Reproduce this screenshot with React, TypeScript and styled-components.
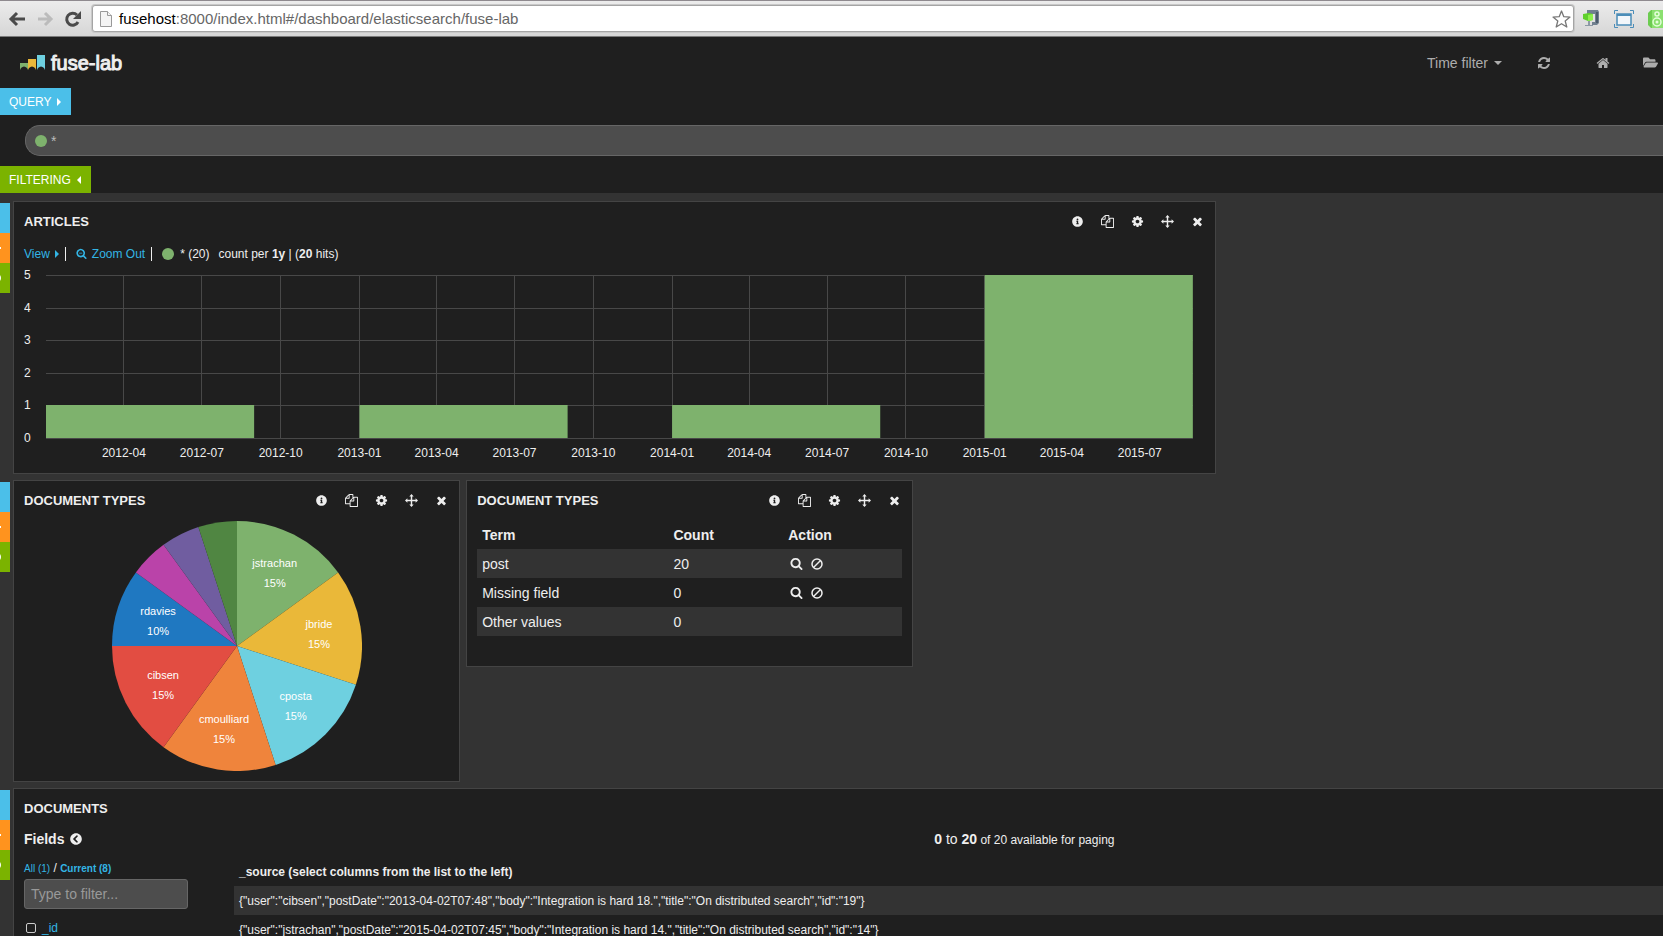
import React from "react";
import styled, { createGlobalStyle } from "styled-components";
import { FaInfoCircle, FaFolderOpen, FaChevronCircleLeft } from "react-icons/fa";

const Global = createGlobalStyle`
  *, *::before, *::after { box-sizing: border-box; }
  html { overflow: hidden; }
  body { margin: 0; background: #333; color: #eee; font: 14px/20px "Liberation Sans", Arial, sans-serif; }
  button, input { font: inherit; color: inherit; }
  button { border: 0; padding: 0; background: none; cursor: pointer; }
  a { color: #33b5e5; text-decoration: none; }
  svg { display: block; flex: none; }
`;

const Page = styled.div`
  height: 100vh;
  overflow: hidden;
`;

const BrowserBar = styled.div`
  display: flex;
  align-items: center;
  height: 37px;
  overflow: hidden;
  background: linear-gradient(#ececec, #d6d6d6);
  border-top: 1px solid #8f8a8f;
  border-bottom: 1px solid #7b7b7b;
`;
const BarGroup = styled.div<{ $gap: number }>`
  display: flex;
  align-items: center;
  flex: none;
  gap: ${(p) => p.$gap}px;
  padding: 0 0 0 8px;
`;
const BarButton = styled.button`
  flex: none;
  display: grid;
  place-items: center;
`;
const Address = styled.div`
  flex: 1;
  min-width: 0;
  display: flex;
  align-items: center;
  gap: 7px;
  height: 27px;
  margin-left: 10px;
  padding: 0 2px 0 7px;
  background: #fff;
  border: 1px solid #a5a5a5;
  border-radius: 3px;
  box-shadow: 0 0 0 1px #c8c8c8;
`;
const AddressText = styled.div`
  flex: 1;
  color: #666;
  font-size: 15px;
  b { color: #000; font-weight: 400; }
`;

const Header = styled.header`
  background: #1f1f1f;
`;
const NavBar = styled.nav`
  display: flex;
  align-items: center;
  height: 51px;
  padding-left: 20px;
`;
const Brand = styled.h1`
  display: flex;
  align-items: center;
  gap: 6px;
  margin: 0;
  flex: 1;
  font-size: 20px;
  line-height: 24px;
  font-weight: 400;
  -webkit-text-stroke: 1px #eee;
`;
const NavItem = styled.button<{ $gap: number }>`
  display: flex;
  align-items: center;
  gap: 6px;
  margin-right: ${(p) => p.$gap}px;
  color: #adadad;
`;
const Toggle = styled.button<{ $color: string }>`
  display: flex;
  align-items: center;
  gap: 6px;
  height: 27px;
  padding: 0 10px 0 9px;
  background: ${(p) => p.$color};
  color: #fff;
  font-size: 12px;
`;
const QueryBox = styled.label`
  display: flex;
  align-items: center;
  gap: 4px;
  height: 31px;
  margin: 10px 0 10px 25px;
  padding-left: 9px;
  background: #4d4d4d;
  border: 1px solid #666;
  border-right: 0;
  border-radius: 15px 0 0 15px;
`;
const Dot = styled.span`
  flex: none;
  width: 12px;
  height: 12px;
  border-radius: 50%;
  background: #7eb26d;
`;
const QueryInput = styled.input`
  flex: 1;
  min-width: 0;
  border: 0;
  outline: 0;
  padding: 0;
  background: none;
  color: #bbb;
`;

const Board = styled.main`
  display: flex;
  flex-direction: column;
  gap: 6px;
  padding-top: 8px;
`;
const Row = styled.section`
  display: flex;
  align-items: flex-start;
`;
const RowTabs = styled.div`
  flex: none;
  width: 10px;
  margin: 2px 3px 0 0;
`;
const RowTab = styled.button<{ $color: string }>`
  display: flex;
  align-items: center;
  width: 10px;
  height: 30px;
  background: ${(p) => p.$color};
  color: #fff;
`;
const Cells = styled.div`
  flex: 1;
  min-width: 0;
  display: flex;
  align-items: flex-start;
  gap: 6px;
`;
const Panel = styled.article<{ $width: string; $height: number; $bleed?: boolean }>`
  width: ${(p) => p.$width};
  min-height: ${(p) => p.$height}px;
  padding: 0 ${(p) => (p.$bleed ? 0 : 10)}px 0 10px;
  background: #1f1f1f;
  border: 1px solid #444;
  border-right-width: ${(p) => (p.$bleed ? 0 : 1)}px;
`;
const PanelHead = styled.div`
  display: flex;
  align-items: center;
  justify-content: space-between;
  height: 39px;
`;
const PanelTitle = styled.h2`
  margin: 0;
  font-size: 13px;
  line-height: 20px;
`;
const Tools = styled.div`
  display: flex;
  align-items: center;
  gap: 17px;
  padding-right: 1px;
`;
const Tool = styled.button`
  display: grid;
  place-items: center;
  width: 13px;
  height: 14px;
  color: #eee;
`;
const Legend = styled.div`
  display: flex;
  align-items: center;
  height: 25px;
  font-size: 12px;
  white-space: pre;
`;
const LegendLink = styled.a`
  display: flex;
  align-items: center;
  gap: 5px;
`;
const Divider = styled.span`
  width: 1px;
  height: 14px;
  margin: 0 10px 0 6px;
  background: #eee;
`;
const SeriesLabel = styled.span`
  display: flex;
  align-items: center;
  gap: 6px;
  margin-right: 9px;
`;
const AxisText = styled.text`
  fill: #eee;
  font-size: 12px;
`;
const PlotRow = styled.div`
  display: flex;
  height: 200px;
  margin-top: 2px;
  padding-right: 12px;
`;
const PieWrap = styled.div`
  display: flex;
  justify-content: center;
`;
const PieText = styled.text`
  fill: #fff;
  font-size: 11px;
  text-anchor: middle;
`;

const Table = styled.table`
  width: 100%;
  border-collapse: collapse;
  table-layout: fixed;
  tbody tr:nth-child(odd) { background: #333; }
  th, td { height: 29px; padding: 0 5px; text-align: left; white-space: nowrap; }
`;
const Actions = styled.div`
  display: flex;
  gap: 7px;
  padding-left: 2px;
`;

const DocsBody = styled.div`
  display: flex;
  gap: 46px;
`;
const Fields = styled.aside`
  flex: none;
  width: 164px;
`;
const FieldsTitle = styled.h3`
  display: flex;
  align-items: center;
  gap: 6px;
  margin: 0;
  font-size: 14px;
  line-height: 22px;
`;
const FieldScopes = styled.div`
  margin-top: 8px;
  font-size: 10px;
  white-space: pre;
  span { font-size: 12px; }
`;
const FilterInput = styled.input`
  display: block;
  width: 100%;
  height: 30px;
  padding: 0 6px;
  background: #4d4d4d;
  border: 1px solid #666;
  border-radius: 3px;
  &::placeholder { color: #999; opacity: 1; }
`;
const FieldItem = styled.div`
  display: flex;
  align-items: center;
  gap: 6px;
  margin-top: 12px;
  padding-left: 2px;
  font-size: 12px;
  line-height: 14px;
`;
const Check = styled.input`
  appearance: none;
  width: 10px;
  height: 10px;
  margin: 0;
  border: 1px solid #ccc;
  border-radius: 2px;
`;
const Docs = styled.div`
  flex: 1;
  min-width: 0;
`;
const Paging = styled.p`
  margin: 0 0 6px;
  padding-left: 49%;
  font-size: 12px;
  line-height: 22px;
  big { font-size: 14px; }
`;
const DocTable = styled(Table)`
  font-size: 12px;
`;

function Glyph({ d, size = 12, box = 1792 }: { d: string; size?: number; box?: number }) {
  return <svg width={size} height={size} viewBox={`0 0 ${box} ${box}`} fill="currentColor" aria-hidden="true"><path d={d} /></svg>;
}
const REFRESH = "M1511 928q0 5-1 7-64 268-268 434.500t-478 166.500q-146 0-282.500-55t-243.500-157l-129 129q-19 19-45 19t-45-19-19-45v-448q0-26 19-45t45-19h448q26 0 45 19t19 45-19 45l-137 137q71 66 161 102t187 36q134 0 250-65t186-179q11-17 53-117 8-23 30-23h192q13 0 22.500 9.500t9.500 22.500zm25-800v448q0 26-19 45t-45 19h-448q-26 0-45-19t-19-45 19-45l138-138q-148-137-349-137-134 0-250 65t-186 179q-11 17-53 117-8 23-30 23h-199q-13 0-22.500-9.500t-9.500-22.500v-7q65-268 270-434.500t480-166.500q146 0 284 55.500t245 156.500l130-129q19-19 45-19t45 19 19 45z";
const HOME = "M1472 992v480q0 26-19 45t-45 19h-384v-384h-256v384h-384q-26 0-45-19t-19-45v-480q0-1 .5-3t.5-3l575-474 575 474q1 2 1 6zm223-69l-62 74q-8 9-21 11h-3q-13 0-21-7l-692-577-692 577q-12 8-24 7-13-2-21-11l-62-74q-8-10-7-23.500t11-21.500l719-599q32-26 76-26t76 26l244 204v-195q0-14 9-23t23-9h192q14 0 23 9t9 23v408l219 182q10 8 11 21.500t-7 23.500z";
const COPY = "M1696 384q40 0 68 28t28 68v1216q0 40-28 68t-68 28h-960q-40 0-68-28t-28-68v-288h-544q-40 0-68-28t-28-68v-672q0-40 20-88t48-76l408-408q28-28 76-48t88-20h416q40 0 68 28t28 68v328q68-40 128-40h416zm-544 213l-299 299h299v-299zm-640-384l-299 299h299v-299zm196 647l316-316v-416h-384v416q0 40-28 68t-68 28h-416v640h512v-256q0-40 20-88t48-76zm956 804v-1152h-384v416q0 40-28 68t-68 28h-416v640h896z";
const COG = "M1152 896q0-106-75-181t-181-75-181 75-75 181 75 181 181 75 181-75 75-181zm512-109v222q0 12-8 23t-20 13l-185 28q-19 54-39 91 35 50 107 138 10 12 10 25t-9 23q-27 37-99 108t-94 71q-12 0-26-9l-138-108q-44 23-91 38-16 136-29 186-7 28-36 28h-222q-14 0-24.500-8.500t-11.500-21.500l-28-184q-49-16-90-37l-141 107q-10 9-25 9-14 0-25-11-126-114-165-168-7-10-7-23 0-12 8-23 15-21 51-66.500t54-70.500q-27-50-41-99l-183-27q-13-2-21-12.500t-8-23.500v-222q0-12 8-23t19-13l186-28q14-46 39-92-40-57-107-138-10-12-10-24 0-10 9-23 26-36 98.500-107.500t94.500-71.500q13 0 26 10l138 107q44-23 91-38 16-136 29-186 7-28 36-28h222q14 0 24.500 8.500t11.500 21.500l28 184q49 16 90 37l142-107q9-9 24-9 13 0 25 10 129 119 165 170 7 8 7 22 0 12-8 23-15 21-51 66.500t-54 70.500q26 50 41 98l183 28q13 2 21 12.500t8 23.500z";
const TIMES = "M1490 1322q0 40-28 68l-136 136q-28 28-68 28t-68-28l-294-294-294 294q-28 28-68 28t-68-28l-136-136q-28-28-28-68t28-68l294-294-294-294q-28-28-28-68t28-68l136-136q28-28 68-28t68 28l294 294 294-294q28-28 68-28t68 28l136 136q28 28 28 68t-28 68l-294 294 294 294q28 28 28 68z";
const SEARCH = "M1216 832q0-185-131.500-316.500t-316.500-131.500-316.500 131.500-131.500 316.500 131.500 316.500 316.500 131.500 316.500-131.500 131.500-316.500zm512 832q0 52-38 90t-90 38q-54 0-90-38l-343-342q-179 124-399 124-143 0-273.500-55.500t-225-150-150-225-55.500-273.500 55.500-273.500 150-225 225-150 273.500-55.500 273.500 55.500 225 150 150 225 55.500 273.500q0 220-124 399l343 343q37 37 37 90z";
const MOVE = "M896 0l300 330h-200v466h466v-200l330 300-330 300v-200h-466v466h200l-300 330-300-330h200v-466h-466v200l-330-300 330-300v200h466v-466h-200z";

const CaretRight = () => <svg width="4" height="8" fill="currentColor"><path d="M0 0l4 4-4 4z" /></svg>;
const CaretLeft = () => <svg width="4" height="8" fill="currentColor"><path d="M4 0L0 4l4 4z" /></svg>;
const CaretDown = () => <svg width="8" height="4" fill="currentColor"><path d="M0 0h8L4 4z" /></svg>;
const Ban = () => (
  <svg width="12" height="12" viewBox="0 0 12 12" fill="none" stroke="currentColor" strokeWidth="1.5">
    <circle cx="6" cy="6" r="5" /><path d="M2.500 9.500l7-7" />
  </svg>
);
const Logo = () => (
  <svg width="25" height="16" viewBox="0 0 25 16">
    <path d="M0 8h8v7l-1-2q-3-3-6 0l-1 2z" fill="#7eb26d" />
    <path d="M8 4h8v11l-1-2q-3-3-6 0l-1 2z" fill="#eab839" />
    <path d="M17 0h8v15l-1-2q-3-3-6 0l-1 2z" fill="#6ed0e0" />
  </svg>
);

const DAY = 86400000;
const START = Date.UTC(2012, 0, 1);
const SPAN = 1339;
const percent = (year: number, month: number) => `${((Date.UTC(year, month - 1, 1) - START) / DAY / SPAN) * 100}%`;
const TICKS = [
  [2012, 4], [2012, 7], [2012, 10], [2013, 1], [2013, 4], [2013, 7], [2013, 10],
  [2014, 1], [2014, 4], [2014, 7], [2014, 10], [2015, 1], [2015, 4], [2015, 7],
];
const BARS = [[2012, 1], [2013, 1], [2014, 1], [2015, 5]];
const LEVELS = [0, 1, 2, 3, 4, 5];
const levelY = (v: number) => 170 - Math.round(v * 32.6);

const PlotSvg = styled.svg`
  flex: 1 1 0;
  min-width: 0;
  overflow: visible;
`;

function Histogram() {
  return (
    <PlotRow>
      <svg width="22" height="200">
        {LEVELS.map((v) => <AxisText key={v} x="0" y={levelY(v) + 4}>{v}</AxisText>)}
      </svg>
      <PlotSvg height="200">
        <g stroke="#484848" shapeRendering="crispEdges">
          {LEVELS.map((v) => <line key={v} x1="0" x2="100%" y1={levelY(v) + 0.5} y2={levelY(v) + 0.5} />)}
          {TICKS.map(([y, m]) => <line key={`${y}-${m}`} x1={percent(y, m)} x2={percent(y, m)} y1={levelY(5)} y2={levelY(0)} />)}
        </g>
        {BARS.map(([y, v]) => (
          <rect key={y} x={percent(y, 1)} y={levelY(v)} width={`${(243 / SPAN) * 100}%`} height={levelY(0) - levelY(v)} fill="#7eb26d" />
        ))}
        {TICKS.map(([y, m]) => (
          <AxisText key={`${y}-${m}`} x={percent(y, m)} y="189" textAnchor="middle">{`${y}-${String(m).padStart(2, "0")}`}</AxisText>
        ))}
      </PlotSvg>
    </PlotRow>
  );
}

const SLICES = [
  { name: "jstrachan", value: 15, color: "#7eb26d" },
  { name: "jbride", value: 15, color: "#eab839" },
  { name: "cposta", value: 15, color: "#6ed0e0" },
  { name: "cmoulliard", value: 15, color: "#ef843c" },
  { name: "cibsen", value: 15, color: "#e24d42" },
  { name: "rdavies", value: 10, color: "#1f78c1" },
  { name: "", value: 5, color: "#ba43a9" },
  { name: "", value: 5, color: "#705da0" },
  { name: "", value: 5, color: "#508642" },
];

function Pie() {
  const r = 125;
  let sum = 0;
  const point = (v: number, radius: number) => {
    const a = (v / 100) * Math.PI * 2;
    return [r + Math.sin(a) * radius, r - Math.cos(a) * radius];
  };
  return (
    <PieWrap>
      <svg width="250" height="251" role="img" aria-label="Documents by user">
        <g transform="translate(0 1)">
          {SLICES.map((s, i) => {
            const from = sum;
            sum += s.value;
            const [x1, y1] = point(from, r);
            const [x2, y2] = point(sum, r);
            const [tx, ty] = point((from + sum) / 2, 83);
            return (
              <g key={i}>
                <path d={`M${r} ${r}L${x1} ${y1}A${r} ${r} 0 0 1 ${x2} ${y2}Z`} fill={s.color} />
                {s.name && (
                  <>
                    <PieText x={tx} y={ty - 5}>{s.name}</PieText>
                    <PieText x={tx} y={ty + 15}>{s.value}%</PieText>
                  </>
                )}
              </g>
            );
          })}
        </g>
      </svg>
    </PieWrap>
  );
}

function Heading({ title, tools = true }: { title: string; tools?: boolean }) {
  return (
    <PanelHead>
      <PanelTitle>{title}</PanelTitle>
      {tools && (
        <Tools>
          <Tool aria-label="Info"><FaInfoCircle size={11} /></Tool>
          <Tool aria-label="Duplicate"><Glyph d={COPY} size={13} /></Tool>
          <Tool aria-label="Configure"><Glyph d={COG} size={13} /></Tool>
          <Tool aria-label="Move"><Glyph d={MOVE} size={13} /></Tool>
          <Tool aria-label="Remove"><Glyph d={TIMES} size={13} /></Tool>
        </Tools>
      )}
    </PanelHead>
  );
}

function RowControls() {
  return (
    <RowTabs>
      <RowTab $color="#4bbfe9" aria-label="Collapse row" />
      <RowTab $color="#ff931e" aria-label="Configure row">
        <svg width="2" height="4" fill="currentColor"><path d="M0 1h1v2H0z" /></svg>
      </RowTab>
      <RowTab $color="#7bb300" aria-label="Add panel">
        <svg width="2" height="6" fill="currentColor"><path d="M0 0q2 3 0 6z" /></svg>
      </RowTab>
    </RowTabs>
  );
}

const TERMS = [
  { term: "post", count: 20, actions: true },
  { term: "Missing field", count: 0, actions: true },
  { term: "Other values", count: 0, actions: false },
];
const DOCS = [
  '{"user":"cibsen","postDate":"2013-04-02T07:48","body":"Integration is hard 18.","title":"On distributed search","id":"19"}',
  '{"user":"jstrachan","postDate":"2015-04-02T07:45","body":"Integration is hard 14.","title":"On distributed search","id":"14"}',
];

export default function App() {
  return (
    <Page>
      <Global />
      <BrowserBar>
        <BarGroup $gap={10}>
          <BarButton aria-label="Back">
            <svg width="18" height="18" viewBox="0 0 18 18" fill="none" stroke="#4a4a4a" strokeWidth="3"><path d="M17 9H4M9 3L3 9l6 6" /></svg>
          </BarButton>
          <BarButton aria-label="Forward">
            <svg width="18" height="18" viewBox="0 0 18 18" fill="none" stroke="#bbb" strokeWidth="3"><path d="M2 9h12M9 3l6 6-6 6" /></svg>
          </BarButton>
          <BarButton aria-label="Reload">
            <svg width="18" height="18" viewBox="0 0 18 18" fill="none" stroke="#4a4a4a" strokeWidth="3"><path d="M14 12a6 6 0 1 1-1-7" /><path d="M17 1v8H9z" fill="#4a4a4a" stroke="none" /></svg>
          </BarButton>
        </BarGroup>
        <Address>
          <svg width="12" height="16" viewBox="0 0 12 16" fill="#f4f4f4" stroke="#999"><path d="M.5.5h7l4 4v11H.5z" /><path d="M7.500.5v4h4" /></svg>
          <AddressText><b>fusehost</b>:8000/index.html#/dashboard/elasticsearch/fuse-lab</AddressText>
          <BarButton aria-label="Bookmark">
            <svg width="19" height="18" viewBox="0 0 19 18" fill="none" stroke="#777" strokeWidth="1.3" strokeLinejoin="round">
              <path d="M9.500 1l2.300 5.700 6.200.4-4.800 3.900 1.600 6-5.300-3.300L4.200 17l1.600-6L1 7.100l6.200-.4z" />
            </svg>
          </BarButton>
        </Address>
        <BarGroup $gap={14}>
          <BarButton aria-label="Archive extension">
            <svg width="18" height="18" viewBox="0 0 18 18">
              <path d="M5 0h11l1 2v11l-2 2h-5v-3h3V4H5z" fill="#70808f" />
              <path d="M14 2h2v11h-2z" fill="#4c5b6b" />
              <path d="M1 4l6-1 4 1v6l-5 1-5-2z" fill="#5fd02c" />
              <path d="M6 5l5-1v6l-5 1z" fill="#8df04c" />
              <path d="M6 11h2v5H6zM3 15h8v1H3z" fill="#8c99a5" />
            </svg>
          </BarButton>
          <BarButton aria-label="Window extension">
            <svg width="20" height="18" viewBox="0 0 20 18" fill="none" stroke="#4b8db8">
              <path d="M.5 4V.5H4M16 .5h3.500V4M19.500 14v3.500H16M4 17.500H.5V14" />
              <rect x="3" y="4" width="14" height="11" fill="#f2f6fa" strokeWidth="1.500" />
              <path d="M3 5h14" strokeWidth="2" />
            </svg>
          </BarButton>
          <BarButton aria-label="Speaker extension">
            <svg width="15" height="20" viewBox="0 0 15 20">
              <path d="M3 1h12v18H3l-3-3V4z" fill="#6ccc50" />
              <path d="M4 1h11v18H4z" fill="#8be070" />
              <g fill="none" stroke="#e4ffda" strokeWidth="1.500"><circle cx="9" cy="5" r="2" /><circle cx="9" cy="13" r="4" /></g>
              <circle cx="9" cy="13" r="1.500" fill="#e4ffda" />
            </svg>
          </BarButton>
        </BarGroup>
      </BrowserBar>

      <Header>
        <NavBar>
          <Brand><Logo />fuse-lab</Brand>
          <NavItem $gap={36}>Time filter <CaretDown /></NavItem>
          <NavItem $gap={46} aria-label="Refresh"><Glyph d={REFRESH} box={1536} /></NavItem>
          <NavItem $gap={33} aria-label="Home"><Glyph d={HOME} size={14} /></NavItem>
          <NavItem $gap={5} aria-label="Open"><FaFolderOpen size={15} /></NavItem>
        </NavBar>
        <Toggle $color="#4bbfe9">QUERY <CaretRight /></Toggle>
        <QueryBox><Dot /><QueryInput defaultValue="*" aria-label="Query" /></QueryBox>
        <Toggle $color="#7bb300">FILTERING <CaretLeft /></Toggle>
      </Header>

      <Board>
        <Row>
          <RowControls />
          <Cells>
            <Panel $width="72.9%" $height={273}>
              <Heading title="ARTICLES" />
              <Legend>
                <LegendLink href="#view">View<CaretRight /></LegendLink>
                <Divider />
                <LegendLink href="#zoom"><Glyph d={`${SEARCH}M512 768h512v128h-512z`} size={11} />Zoom Out</LegendLink>
                <Divider />
                <SeriesLabel><Dot />* (20)</SeriesLabel>
                <span>count per <b>1y</b> | (<b>20</b> hits)</span>
              </Legend>
              <Histogram />
            </Panel>
          </Cells>
        </Row>
        <Row>
          <RowControls />
          <Cells>
            <Panel $width="27.1%" $height={302}><Heading title="DOCUMENT TYPES" /><Pie /></Panel>
            <Panel $width="27.1%" $height={187}>
              <Heading title="DOCUMENT TYPES" />
              <Table>
                <colgroup><col width="45%" /><col width="27%" /><col width="28%" /></colgroup>
                <thead><tr><th>Term</th><th>Count</th><th>Action</th></tr></thead>
                <tbody>
                  {TERMS.map((t) => (
                    <tr key={t.term}>
                      <td>{t.term}</td><td>{t.count}</td>
                      <td>{t.actions && (
                        <Actions>
                          <Tool aria-label="Filter for"><Glyph d={SEARCH} size={13} /></Tool>
                          <Tool aria-label="Filter out"><Ban /></Tool>
                        </Actions>
                      )}</td>
                    </tr>
                  ))}
                </tbody>
              </Table>
            </Panel>
          </Cells>
        </Row>
        <Row>
          <RowControls />
          <Cells>
            <Panel $width="100%" $height={302} $bleed>
              <Heading title="DOCUMENTS" tools={false} />
              <DocsBody>
                <Fields>
                  <FieldsTitle>Fields <FaChevronCircleLeft size={12} /></FieldsTitle>
                  <FieldScopes><a href="#all">All (1)</a><span> / </span><a href="#current"><b>Current (8)</b></a></FieldScopes>
                  <FilterInput placeholder="Type to filter..." aria-label="Filter fields" />
                  <FieldItem><Check type="checkbox" aria-label="_id" /><a href="#id">_id</a></FieldItem>
                </Fields>
                <Docs>
                  <Paging><big><b>0</b> to <b>20</b></big> of 20 available for paging</Paging>
                  <DocTable>
                    <thead><tr><th>_source (select columns from the list to the left)</th></tr></thead>
                    <tbody>{DOCS.map((d) => <tr key={d}><td>{d}</td></tr>)}</tbody>
                  </DocTable>
                </Docs>
              </DocsBody>
            </Panel>
          </Cells>
        </Row>
      </Board>
    </Page>
  );
}
